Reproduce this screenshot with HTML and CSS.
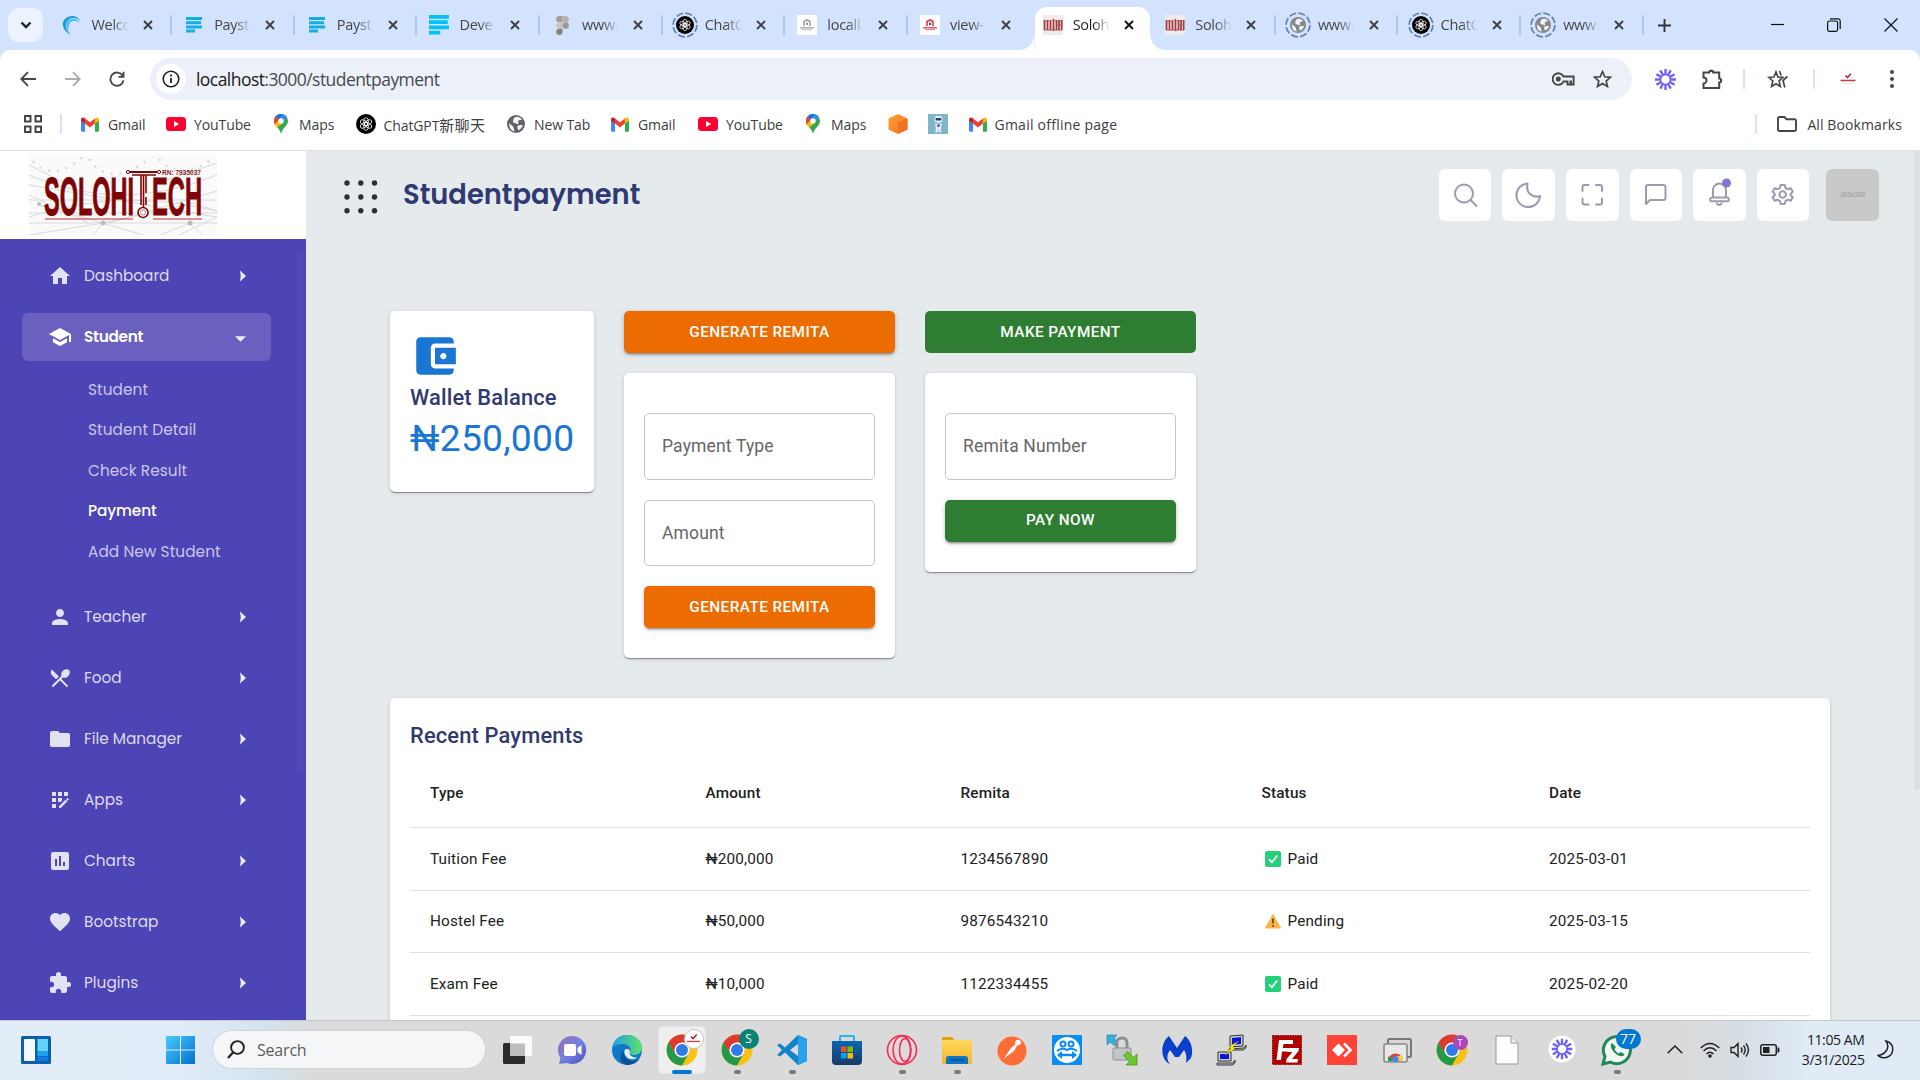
FILE: index.html
```html
<!DOCTYPE html>
<html lang="en">
<head>
<meta charset="utf-8">
<title>Studentpayment</title>
<link rel="stylesheet" href="styles.css">
</head>
<body>
<svg class="defs" width="0" height="0" aria-hidden="true">
  <defs>
    <linearGradient id="gBlue" x1="0" y1="0" x2="1" y2="1"><stop offset="0" stop-color="#4cc9fb"/><stop offset="1" stop-color="#0071cf"/></linearGradient>
    <linearGradient id="gEdge" x1="0" y1="0" x2="1" y2="0"><stop offset="0" stop-color="#1fa2e6"/><stop offset="1" stop-color="#5fe06a"/></linearGradient>
    <linearGradient id="gMeet" x1="0" y1="0" x2="1" y2="1"><stop offset="0" stop-color="#9a6fb8"/><stop offset=".5" stop-color="#7482dc"/><stop offset="1" stop-color="#4f4bc8"/></linearGradient>
    <linearGradient id="gStore" x1="0" y1="0" x2="0" y2="1"><stop offset="0" stop-color="#0a66b5"/><stop offset="1" stop-color="#173a66"/></linearGradient>
    <linearGradient id="gFolder" x1="0" y1="0" x2="0" y2="1"><stop offset="0" stop-color="#ffd75e"/><stop offset="1" stop-color="#f5b52a"/></linearGradient>
    <linearGradient id="gHex" x1="0" y1="0" x2="1" y2="1"><stop offset="0" stop-color="#ffa12e"/><stop offset="1" stop-color="#f4712a"/></linearGradient>
    <symbol id="x" viewBox="0 0 10 10"><path d="M1 1l8 8M9 1l-8 8" stroke="currentColor" stroke-width="1.9"/></symbol>
    <symbol id="stack" viewBox="0 0 16 16"><path d="M0 0h16v3H0zM0 4.2h15v3H0zM0 8.4h16v3H0zM0 12.6h9v3H0z" fill="currentColor"/></symbol>
    <symbol id="swoosh" viewBox="0 0 20 20"><path d="M9 20C-2 15-2 2 10 .5 15 0 18 3 19 6 15 1.500 8 1.500 5 7c-2 5 0 9 4 13z" fill="#1a9de0"/><path d="M7 17C2 10 6 3 12 3.500c4 0 5 3 6 5-3-4-8-4-10 0-1.500 3-1.500 6-1 8.500z" fill="#49c0f2"/></symbol>
    <symbol id="figma" viewBox="0 0 12 18"><path d="M3 0h3v6H3a3 3 0 010-6z" fill="#a49d98"/><path d="M6 0h3a3 3 0 010 6H6z" fill="#b7b0ac"/><path d="M3 6h3v6H3a3 3 0 010-6z" fill="#cbc6c2"/><circle cx="9" cy="9" r="3" fill="#999"/><path d="M3 12h3v3a3 3 0 11-3-3z" fill="#87827f"/></symbol>
    <symbol id="knot" viewBox="0 0 20 20"><circle cx="10" cy="10" r="10" fill="#000"/><g fill="none" stroke="#fff" stroke-width=".8"><ellipse cx="10" cy="7.600" rx="2.400" ry="4"/><ellipse cx="10" cy="7.600" rx="2.400" ry="4" transform="rotate(60 10 10)"/><ellipse cx="10" cy="7.600" rx="2.400" ry="4" transform="rotate(120 10 10)"/><ellipse cx="10" cy="7.600" rx="2.400" ry="4" transform="rotate(180 10 10)"/><ellipse cx="10" cy="7.600" rx="2.400" ry="4" transform="rotate(240 10 10)"/><ellipse cx="10" cy="7.600" rx="2.400" ry="4" transform="rotate(300 10 10)"/></g></symbol>
    <symbol id="globe" viewBox="0 0 20 20"><circle cx="10" cy="10" r="10" fill="currentColor"/><path d="M3 8c0 3 3 3 4 5s0 3 2 5C4 18 1.500 13 3 8zM8 3c3-2 7-.5 8.500 2-1 1-3 0-4 1.500s1 2 0 3.500c-1.500 1-2-1-4-1S6 6 8 3zM12 12c2-1.500 4-.5 5.500-1-.5 3-2.500 5-5 6-.5-2-2-3.500-.5-5z" fill="#f1f3f8"/></symbol>
    <symbol id="ring" viewBox="0 0 26 26"><circle cx="13" cy="13" r="11.900" fill="none" stroke="#5f7fb6" stroke-width="1.700" stroke-dasharray="7 2.350"/></symbol>
    <symbol id="school" viewBox="0 0 20 20"><path fill="#fff" d="M0 0h20v20H0z"/><path d="M7 11V6.500l3-1.700 3 1.700V11" fill="none" stroke="currentColor" stroke-width="1.500"/><path d="M9 7.500h2V10H9z" fill="currentColor"/><path d="M3 12.800h14" stroke="currentColor" stroke-width="1.200"/><path d="M5 14.700h10" stroke="currentColor" stroke-width=".7"/></symbol>
    <symbol id="solo" viewBox="0 0 20 20"><path fill="#f0eaea" d="M0 0h20v20H0z"/><path d="M1.500 5v10M4.500 5v10M7.500 5v10M10.500 4v12M13.500 5v10M16 5v10M18.700 5v10" stroke="#a0383b" stroke-width="1.700"/><path d="M1 15h18M1 6h5M12 6h7M13 10h6" stroke="#ac5658"/></symbol>
    <symbol id="gmail" viewBox="0 0 20 16"><path d="M0 2.500L4.500 6v10H1.400Q0 16 0 14.500z" fill="#4285f4"/><path d="M20 2.500L15.500 6v10h3.100Q20 16 20 14.500z" fill="#34a853"/><path d="M4.500 1.300L10 5.500l5.500-4.200V7L10 11.200 4.500 7z" fill="#ea4335"/><path d="M0 2.500C0 .2 2.500-.6 4.500 1.300V7L0 3.700z" fill="#c5221f"/><path d="M20 2.500c0-2.300-2.500-3.100-4.500-1.200V7L20 3.700z" fill="#fbbc04"/></symbol>
    <symbol id="yt" viewBox="0 0 20 14"><rect width="20" height="14" rx="3.500" fill="#f03"/><path d="M8 4v6l5.200-3z" fill="#fff"/></symbol>
    <symbol id="pin" viewBox="0 0 14 20"><path d="M7 20C6 14 0 12 0 7a7 7 0 0114 0c0 5-6 7-7 13z" fill="#34a853"/><path d="M.7 10.500A7 7 0 011.500 2.600L5 5.500z" fill="#ea4335"/><path d="M1.500 2.600A7 7 0 019 .3L5 5.500z" fill="#1a73e8"/><path d="M9 .3a7 7 0 014 3L8.500 8.500 5 5.500z" fill="#4285f4"/><path d="M.7 10.500L5.500 5l3 4L3.300 13.800z" fill="#fbbc04"/><circle cx="7" cy="7" r="2.700" fill="#fff"/></symbol>
    <symbol id="burst" viewBox="-12 -12 24 24"><g stroke="#6a63f6" stroke-width="2.700"><path d="M0-12V-5M0 5v7M-12 0h7M5 0h7M-6-10.400l3.500 6M2.500 4.300l3.500 6.100M6-10.400l-3.500 6M-2.500 4.300l-3.500 6.100M-10.400-6l6 3.500M4.300 2.500l6.100 3.500M-10.400 6l6-3.500M4.300-2.500l6.100-3.500"/></g><circle r="5.700" fill="none" stroke="#6a63f6" stroke-width="1.600"/></symbol>
    <symbol id="chrome" viewBox="-16 -16 32 32"><circle r="15.500" fill="#fbc116"/><path d="M-13.400-7.700A15.500 15.500 0 0113.400-7.700L0-7.500-6.500 3.700z" fill="#dd3b2f"/><path d="M-13.400-7.700A15.500 15.500 0 000 15.500L6.500 3.700-6.500 3.700z" fill="#239a4a"/><path d="M-13.400-7.700L-6.500 3.700 0-7.500z" fill="#dd3b2f"/><circle r="7.600" fill="#fff"/><circle r="6" fill="#2f7be8"/></symbol>
    <symbol id="right" viewBox="0 0 6 12"><path d="M0 .5L6 6 0 11.500q1.500-5.500 0-11z" fill="#edecf8"/></symbol>
  </defs>
</svg>

<div class="tabs">
  <div class="tab-search"><svg width="12" height="8" viewBox="0 0 12 8"><path d="M1.500 1.500L6 6l4.500-4.500" fill="none" stroke="#1f1f1f" stroke-width="2.300"/></svg></div>
  <div class="tab"><span class="fav"><svg width="19" height="20"><use href="#swoosh"/></svg></span><span class="tab-name">Welcc</span><svg class="close"><use href="#x"/></svg></div>
  <div class="tab"><span class="fav c-pay"><svg width="16" height="16"><use href="#stack"/></svg></span><span class="tab-name">Payst</span><svg class="close"><use href="#x"/></svg></div>
  <div class="tab"><span class="fav c-pay"><svg width="16" height="16"><use href="#stack"/></svg></span><span class="tab-name">Payst</span><svg class="close"><use href="#x"/></svg></div>
  <div class="tab"><span class="fav c-dev"><svg width="20" height="20"><use href="#stack"/></svg></span><span class="tab-name">Deve</span><svg class="close"><use href="#x"/></svg></div>
  <div class="tab"><span class="fav"><svg width="13" height="19"><use href="#figma"/></svg></span><span class="tab-name">www.</span><svg class="close"><use href="#x"/></svg></div>
  <div class="tab"><span class="fav"><svg width="18" height="18"><use href="#knot"/></svg><svg class="ring"><use href="#ring"/></svg></span><span class="tab-name">ChatG</span><svg class="close"><use href="#x"/></svg></div>
  <div class="tab"><span class="fav c-grey"><svg width="20" height="20"><use href="#school"/></svg></span><span class="tab-name">locall</span><svg class="close"><use href="#x"/></svg></div>
  <div class="tab before-active"><span class="fav c-red"><svg width="20" height="20"><use href="#school"/></svg></span><span class="tab-name">view-</span><svg class="close"><use href="#x"/></svg></div>
  <div class="tab active"><span class="fav"><svg width="20" height="20"><use href="#solo"/></svg></span><span class="tab-name">Soloh</span><svg class="close"><use href="#x"/></svg></div>
  <div class="tab"><span class="fav"><svg width="20" height="20"><use href="#solo"/></svg></span><span class="tab-name">Soloh</span><svg class="close"><use href="#x"/></svg></div>
  <div class="tab"><span class="fav c-globe"><svg width="16" height="16"><use href="#globe"/></svg><svg class="ring"><use href="#ring"/></svg></span><span class="tab-name">www.</span><svg class="close"><use href="#x"/></svg></div>
  <div class="tab"><span class="fav"><svg width="18" height="18"><use href="#knot"/></svg><svg class="ring"><use href="#ring"/></svg></span><span class="tab-name">ChatG</span><svg class="close"><use href="#x"/></svg></div>
  <div class="tab"><span class="fav c-globe"><svg width="16" height="16"><use href="#globe"/></svg><svg class="ring"><use href="#ring"/></svg></span><span class="tab-name">www.</span><svg class="close"><use href="#x"/></svg></div>
  <svg class="new-tab" width="13" height="13" viewBox="0 0 13 13"><path d="M6.500 0v13M0 6.500h13" stroke="#333" stroke-width="1.900"/></svg>
  <div class="window-controls">
    <svg width="13" height="14" viewBox="0 0 13 14"><path d="M0 6.500h13" stroke="#111" stroke-width="1.200"/></svg>
    <svg width="14" height="14" viewBox="0 0 14 14"><g fill="none" stroke="#111" stroke-width="1.200"><rect x=".6" y="3" width="10" height="10.400" rx="1.800"/><path d="M3 .8h8a2.200 2.200 0 012.200 2.200v8"/></g></svg>
    <svg width="14" height="14" viewBox="0 0 14 14"><path d="M.5.500l13 13M13.500.500l-13 13" stroke="#111" stroke-width="1.200"/></svg>
  </div>
</div>

<div class="toolbar-wrap">
<div class="toolbar">
  <div class="nav-icons">
    <svg width="16" height="16" viewBox="0 0 16 16"><path d="M16 8H1.500M8 1.200L1.300 8 8 14.800" fill="none" stroke="#454746" stroke-width="1.900"/></svg>
    <svg width="16" height="16" viewBox="0 0 16 16"><path d="M0 8h14.500M8 1.200L14.700 8 8 14.800" fill="none" stroke="#aaaeae" stroke-width="1.900"/></svg>
    <svg width="16" height="16" viewBox="0 0 17 17"><path d="M14.500 5A7 7 0 1015.400 10M15.400.8v5.400H10" fill="none" stroke="#454746" stroke-width="2"/></svg>
  </div>
  <div class="address">
    <span class="info"><svg width="18" height="18" viewBox="0 0 18 18"><circle cx="9" cy="9" r="7.800" fill="none" stroke="#1f1f1f" stroke-width="1.600"/><path d="M9 8v5M9 4.600v2" stroke="#1f1f1f" stroke-width="1.800"/></svg></span>
    <span class="url"><b>localhost</b>:3000/studentpayment</span>
    <svg class="key" width="23" height="14" viewBox="0 0 23 14"><path d="M11.500 4.500A5.600 5.600 0 101.200 9.500a5.600 5.600 0 0010.300 0h4v3h3v-3h.5v3h2.600v-8z" fill="none" stroke="#454746" stroke-width="1.900"/><circle cx="6.300" cy="7" r="2.500" fill="#454746"/></svg>
    <svg width="19" height="18" viewBox="0 0 19 18"><path d="M9.500 1.700l2.300 5.100 5.600.5-4.200 3.700 1.200 5.500-4.900-2.900-4.900 2.900L5.800 11 1.600 7.300l5.600-.5z" fill="none" stroke="#454746" stroke-width="1.700"/></svg>
  </div>
  <div class="tool-icons">
    <svg width="21" height="21"><use href="#burst"/></svg>
    <svg width="21" height="21" viewBox="0 0 21 21"><path d="M1.500 3.500h5.700a2 2 0 014 0h6v6a2 2 0 010 4V19H1.500v-4.500a2.800 2.800 0 000-6z" fill="none" stroke="#454746" stroke-width="2"/><path d="M7.500 3a1.700 1.700 0 013.400 0zM18 9.500a2 2 0 010 4z" fill="#454746"/></svg>
    <i class="sep"></i>
    <svg width="21" height="19" viewBox="0 0 21 19"><path d="M9 2l1.900 5 5 .4-3.800 3.500 1.200 5.500L9 13.700l-4.400 2.700L5.800 11 1.900 7.400l5-.4z" fill="none" stroke="#454746" stroke-width="1.700"/><path d="M12.500 1l1.700 4.500M20.500 6.500l-4.500 4 1.800 7" fill="none" stroke="#454746" stroke-width="1.700"/></svg>
    <i class="sep"></i>
    <svg width="16" height="12" viewBox="0 0 16 12"><path d="M5.500 2.500l2 2L11 .8" fill="none" stroke="#b71c2b" stroke-width="1.500"/><path d="M.5 7.500h15" stroke="#c2414d" stroke-width="1.600"/><path d="M3 10.500h10" stroke="#f6dede"/></svg>
    <svg width="4" height="18" viewBox="0 0 4 18"><g fill="#454746"><circle cx="2" cy="2" r="2"/><circle cx="2" cy="9" r="2"/><circle cx="2" cy="16" r="2"/></g></svg>
  </div>
</div>
</div>

<div class="bookmarks">
  <svg class="apps" width="18" height="18" viewBox="0 0 18 18"><path d="M1 1h5.500v5.500H1zM11.500 1H17v5.500h-5.500zM1 11.500h5.500V17H1zM11.500 11.500H17V17h-5.500z" fill="none" stroke="#454746" stroke-width="2"/></svg>
  <i class="sep"></i>
  <span class="bm bm-gmail"><svg width="18" height="15"><use href="#gmail"/></svg>Gmail</span>
  <span class="bm bm-yt"><svg width="20" height="14"><use href="#yt"/></svg>YouTube</span>
  <span class="bm bm-maps"><svg width="14" height="20"><use href="#pin"/></svg>Maps</span>
  <span class="bm bm-chat"><svg width="20" height="20"><use href="#knot"/></svg><span>ChatGPT<span class="cjk">新聊天</span></span></span>
  <span class="bm bm-new c-dark"><svg width="18" height="18"><use href="#globe"/></svg>New Tab</span>
  <span class="bm bm-gmail second"><svg width="18" height="15"><use href="#gmail"/></svg>Gmail</span>
  <span class="bm bm-yt"><svg width="20" height="14"><use href="#yt"/></svg>YouTube</span>
  <span class="bm bm-maps"><svg width="14" height="20"><use href="#pin"/></svg>Maps</span>
  <span class="bm bm-icon"><svg width="20" height="20" viewBox="0 0 20 20"><path d="M10 0l9.500 4.500v11L10 20 .5 15.500v-11z" fill="url(#gHex)"/><path d="M10 8.500l9.500-4v11L10 20z" fill="#ef6c20" opacity=".7"/></svg></span>
  <span class="bm bm-icon"><svg width="20" height="20" viewBox="0 0 20 20"><path fill="#7fb5c8" d="M0 0h20v20H0z"/><rect x="6.500" y="2" width="8" height="6.500" rx="3" fill="#eef3f8"/><rect x="7.500" y="4" width="6" height="2.500" rx="1" fill="#24406e"/><path d="M7 9.500h7l-1 5 .5 4h-2.300l-.7-3-.7 3H7.300l.5-4z" fill="#e4ebf5"/><circle cx="10.500" cy="11.500" r="1.500" fill="#3b6dc4"/></svg></span>
  <span class="bm bm-off"><svg width="18" height="15"><use href="#gmail"/></svg>Gmail offline page</span>
  <span class="all"><i class="sep"></i><svg width="20" height="16" viewBox="0 0 20 16"><path d="M1 2.500Q1 1 2.500 1h5l2 2.200h8Q19 3.200 19 4.700v8.800Q19 15 17.500 15h-15Q1 15 1 13.500z" fill="none" stroke="#454746" stroke-width="1.900"/></svg><span class="all-text">All Bookmarks</span></span>
</div>

<div class="page">
  <aside class="sidebar">
    <div class="logo">
      <svg width="188" height="80" viewBox="0 0 188 80">
        <path fill="#fafafa" d="M0 0h188v80H0z"/>
        <g stroke="#d9d9d9" fill="none"><path d="M0 30L188 62M0 58h188M0 68h188M10 50l64 18 90-20 24 8M74 68L0 80M74 68l-10 12M74 68l40 12M161 68l-30 12M161 68l12 12M188 62L150 80M0 40l60 28M188 36L80 68M0 10l40 20M188 8l-60 20"/><path d="M4 6q20 22 50-4M60 4q20 30 60 0M130 4q20 24 56-2" stroke-dasharray="2 7" stroke-width="2.500"/><path d="M0 20q90 40 188 0M0 45h188M0 62q90-30 188-6"/></g>
        <g fill="#bbb"><circle cx="74" cy="68" r="2.500"/><circle cx="161" cy="68" r="2.500"/><circle cx="10" cy="49" r="2"/></g>
        <g class="logo-text"><text x="15" y="60" textLength="90" lengthAdjust="spacingAndGlyphs">SOLOHI</text><text x="123" y="60" textLength="50" lengthAdjust="spacingAndGlyphs">ECH</text></g>
        <g stroke="#7d0505" fill="none"><path d="M101 17h27" stroke-width="2"/><path d="M103 20h24M112 20v30M114.500 20v32M117 20v18M117 42v8" stroke-width="1.600"/><circle cx="99" cy="17" r="1.600"/><circle cx="130" cy="17" r="1.600"/><circle cx="114" cy="57.500" r="5" stroke-width="1.600" fill="#fff"/><circle cx="114" cy="57.500" r="2.600" stroke="#c77"/><path d="M16 64h88M124 64h49" stroke="#c22b2b" stroke-width="1.200"/></g>
        <text class="logo-rn" x="133" y="19.500" textLength="39" lengthAdjust="spacingAndGlyphs">RN: 7935037</text>
      </svg>
    </div>
    <nav class="menu">
      <div class="item"><svg width="24" height="24" viewBox="0 0 24 24"><path d="M10 20v-6h4v6h5v-8h3L12 3 2 12h3v8z"/></svg><span>Dashboard</span><svg class="arr"><use href="#right"/></svg></div>
      <div class="item open"><svg width="24" height="24" viewBox="0 0 24 24"><path d="M5 13.200v4L12 21l7-3.800v-4L12 17zM12 3L1 9l11 6 9-4.900V17h2V9z"/></svg><span>Student</span><svg class="down" viewBox="0 0 12 6"><path d="M0 0h12L6 6z"/></svg></div>
      <div class="sub">
        <div>Student</div><div>Student Detail</div><div>Check Result</div><div class="current">Payment</div><div>Add New Student</div>
      </div>
      <div class="item"><svg width="24" height="24" viewBox="0 0 24 24"><path d="M12 12c2.200 0 4-1.800 4-4s-1.800-4-4-4-4 1.800-4 4 1.800 4 4 4zm0 2c-2.700 0-8 1.300-8 4v2h16v-2c0-2.700-5.300-4-8-4z"/></svg><span>Teacher</span><svg class="arr"><use href="#right"/></svg></div>
      <div class="item"><svg width="24" height="24" viewBox="0 0 24 24"><path d="M8.100 13.340l2.830-2.830L3.910 3.500c-1.560 1.560-1.560 4.090 0 5.660l4.190 4.180zm6.780-1.810c1.530.71 3.680.21 5.270-1.380 1.910-1.910 2.280-4.650.81-6.120-1.460-1.460-4.200-1.100-6.120.81-1.590 1.590-2.090 3.740-1.380 5.270L3.700 19.870l1.410 1.410L12 14.410l6.880 6.880 1.410-1.410L13.410 13l1.470-1.470z"/></svg><span>Food</span><svg class="arr"><use href="#right"/></svg></div>
      <div class="item"><svg width="24" height="24" viewBox="0 0 24 24"><path d="M10 4H4c-1.100 0-2 .9-2 2v12c0 1.100.9 2 2 2h16c1.100 0 2-.9 2-2V8c0-1.100-.9-2-2-2h-8z"/></svg><span>File Manager</span><svg class="arr"><use href="#right"/></svg></div>
      <div class="item"><svg width="24" height="24" viewBox="0 0 24 24"><path d="M10 4h4v4h-4zM4 16h4v4H4zM4 10h4v4H4zM4 4h4v4H4zM14 12.420V10h-4v4h2.420zM20.880 11.290l-1.170-1.170a.4.4 0 00-.58 0l-.88.88L20 12.750l.88-.88a.4.400 0 000-.58zM11 18.250V20h1.750l6.670-6.670-1.750-1.750zM16 4h4v4h-4z"/></svg><span>Apps</span><svg class="arr"><use href="#right"/></svg></div>
      <div class="item"><svg width="24" height="24" viewBox="0 0 24 24"><path fill-rule="evenodd" d="M19 3H5a2 2 0 00-2 2v14c0 1.100.9 2 2 2h14a2 2 0 002-2V5a2 2 0 00-2-2zM9 17H7v-7h2zm4 0h-2V7h2zm4 0h-2v-4h2z"/></svg><span>Charts</span><svg class="arr"><use href="#right"/></svg></div>
      <div class="item"><svg width="24" height="24" viewBox="0 0 24 24"><path d="M12 21.350l-1.450-1.320C5.400 15.360 2 12.280 2 8.500 2 5.420 4.420 3 7.500 3c1.740 0 3.410.81 4.500 2.090C13.090 3.810 14.760 3 16.500 3 19.580 3 22 5.420 22 8.500c0 3.780-3.400 6.860-8.550 11.540z"/></svg><span>Bootstrap</span><svg class="arr"><use href="#right"/></svg></div>
      <div class="item"><svg width="24" height="24" viewBox="0 0 24 24"><path d="M20.500 11H19V7c0-1.100-.9-2-2-2h-4V3.500a2.500 2.500 0 00-5 0V5H4c-1.100 0-1.990.9-1.990 2v3.800H3.500c1.490 0 2.700 1.210 2.700 2.700s-1.210 2.700-2.700 2.700H2V20c0 1.100.9 2 2 2h3.800v-1.500c0-1.490 1.210-2.700 2.700-2.700s2.700 1.210 2.700 2.700V22H17c1.100 0 2-.9 2-2v-4h1.500a2.500 2.500 0 000-5z"/></svg><span>Plugins</span><svg class="arr"><use href="#right"/></svg></div>
      <i class="thumb"></i>
    </nav>
  </aside>

  <main class="main">
    <header class="header">
      <svg class="dots" width="34" height="34" viewBox="0 0 34 34"><g fill="#2a3036"><circle cx="3" cy="3" r="2.700"/><circle cx="16.800" cy="3" r="2.700"/><circle cx="30.500" cy="3" r="2.700"/><circle cx="3" cy="17" r="2.700"/><circle cx="16.800" cy="17" r="2.700"/><circle cx="30.500" cy="17" r="2.700"/><circle cx="3" cy="30.700" r="2.700"/><circle cx="16.800" cy="30.700" r="2.700"/><circle cx="30.500" cy="30.700" r="2.700"/></g></svg>
      <h1>Studentpayment</h1>
      <div class="actions">
        <span class="act"><svg viewBox="0 0 52 52"><circle cx="25" cy="24.500" r="9"/><path d="M31.500 31l6 6"/></svg></span>
        <span class="act"><svg viewBox="0 0 52 52"><path d="M25.500 14.500A11.800 11.800 0 1038 27C30 29.500 23.500 23.500 25.500 14.500z"/></svg></span>
        <span class="act"><svg viewBox="0 0 52 52"><path d="M16.500 22v-4a2 2 0 012-2h4M30 16h4a2 2 0 012 2v4M36 29.500v4a2 2 0 01-2 2h-4M22.500 35.500h-4a2 2 0 01-2-2v-4"/></svg></span>
        <span class="act"><svg viewBox="0 0 52 52"><path d="M16 35V18a2 2 0 012-2h15.500a2 2 0 012 2v11a2 2 0 01-2 2H20z"/></svg></span>
        <span class="act"><svg viewBox="0 0 52 52"><path d="M20 28.500v-7.500a6.500 6.500 0 0113 0v7.500M19 28.500h15a1.500 1.500 0 010 3.800H19a1.500 1.500 0 010-3.800zM24 34.500a2.600 2.600 0 004.600 0"/><circle class="badge" cx="33.500" cy="14" r="4.500"/></svg></span>
        <span class="act"><svg viewBox="0 0 52 52"><circle cx="25.700" cy="25.500" r="3.300"/><path d="M23.700 16h4l.8 3 2.300 1.200 3-.9 2 3.400-2.200 2.200v1.200l2.200 2.200-2 3.400-3-.9-2.300 1.200-.8 3h-4l-.8-3-2.300-1.200-3 .9-2-3.400 2.200-2.200v-1.200l-2.200-2.200 2-3.400 3 .9 2.300-1.200z"/></svg></span>
        <span class="avatar">300x300</span>
      </div>
    </header>

    <div class="content">
      <div class="cards">
        <section class="card wallet">
          <svg width="50" height="50" viewBox="0 0 24 24"><path fill="#1976d2" d="M21 18v1c0 1.100-.9 2-2 2H5c-1.110 0-2-.9-2-2V5c0-1.100.89-2 2-2h14c1.100 0 2 .9 2 2v1h-9c-1.110 0-2 .9-2 2v8c0 1.100.89 2 2 2zm-9-2h10V8H12zm4-2.500c-.83 0-1.500-.67-1.500-1.500s.67-1.500 1.500-1.500 1.500.67 1.500 1.500-.67 1.500-1.500 1.500z"/></svg>
          <h2>Wallet Balance</h2>
          <div class="sum">₦250,000</div>
        </section>
        <div class="col">
          <div class="btn orange">GENERATE REMITA</div>
          <section class="card form">
            <div class="field">Payment Type</div>
            <div class="field">Amount</div>
            <div class="btn orange">GENERATE REMITA</div>
          </section>
        </div>
        <div class="col">
          <div class="btn green flat">MAKE PAYMENT</div>
          <section class="card form">
            <div class="field">Remita Number</div>
            <div class="btn green">PAY NOW</div>
          </section>
        </div>
      </div>
      <section class="card recent">
        <h2>Recent Payments</h2>
        <div class="row head"><span>Type</span><span>Amount</span><span>Remita</span><span>Status</span><span>Date</span></div>
        <div class="row"><span>Tuition Fee</span><span>₦200,000</span><span>1234567890</span><span class="st"><svg width="16" height="16" viewBox="0 0 16 16"><rect width="16" height="16" rx="2" fill="#25d07a"/><path d="M4 8.300L7 11.300 12.200 4.500" fill="none" stroke="#fff" stroke-width="1.700"/></svg>Paid</span><span>2025-03-01</span></div>
        <div class="row"><span>Hostel Fee</span><span>₦50,000</span><span>9876543210</span><span class="st"><svg width="16" height="16" viewBox="0 0 16 16"><path d="M8 1.500L15.500 15H.5z" fill="#fbb34c" stroke="#fbb34c" stroke-linejoin="round"/><path d="M8 5.500v5M8 12v1.800" stroke="#4a3a22" stroke-width="1.500"/></svg>Pending</span><span>2025-03-15</span></div>
        <div class="row"><span>Exam Fee</span><span>₦10,000</span><span>1122334455</span><span class="st"><svg width="16" height="16" viewBox="0 0 16 16"><rect width="16" height="16" rx="2" fill="#25d07a"/><path d="M4 8.300L7 11.300 12.200 4.500" fill="none" stroke="#fff" stroke-width="1.700"/></svg>Paid</span><span>2025-02-20</span></div>
      </section>
    </div>
  </main>
  <div class="scroll"></div>
</div>

<footer class="taskbar">
  <svg class="widgets" width="30" height="28" viewBox="0 0 30 28"><rect width="30" height="28" rx="1.500" fill="#0c5fa8"/><rect x="3" y="3" width="11" height="22" rx="1" fill="#f4f7fb"/><path d="M16.500 3H27v12H16.500z" fill="#62d3fb"/><path d="M16.500 15H27v5H16.500z" fill="#1ba0f2"/><path d="M16.500 20.500H27V25H16.500z" fill="#0a7de0"/></svg>
  <svg class="start" width="29" height="28" viewBox="0 0 29 28"><path d="M0 0h14v13.500H0zM15 0h14v13.500H15zM0 14.500h14V28H0zM15 14.500h14V28H15z" fill="url(#gBlue)"/></svg>
  <div class="search"><svg width="18" height="19" viewBox="0 0 18 19"><circle cx="10.500" cy="7.500" r="6.400" fill="none" stroke="#222" stroke-width="1.900"/><path d="M6 12.500l-5 5.500" stroke="#222" stroke-width="2.200"/></svg>Search</div>
  <div class="apps-row">
    <span class="app"><svg viewBox="0 0 32 32"><rect x="2" y="9" width="22" height="21" rx="1.500" fill="#2c2c2c"/><rect x="9" y="2" width="22" height="20" rx="1" fill="#fbfbfb"/><path d="M9 9.500h15V22H9z" fill="#bdbdbd"/></svg></span>
    <span class="app"><svg viewBox="0 0 32 32"><path d="M16 2a14 14 0 11-5 27l-8 1 1.500-6A14 14 0 0116 2z" fill="url(#gMeet)"/><rect x="8" y="10" width="12" height="12" rx="2" fill="#fff"/><path d="M21.500 14l4-3v10l-4-3z" fill="#fff"/></svg></span>
    <span class="app"><svg viewBox="0 0 32 32"><circle cx="16" cy="16" r="15" fill="#0f78c8"/><path d="M1.500 13C3 5 9 1 16 1c9 0 15 6 15 12.500 0 5-4 7.500-8 7.500-3 0-5-1-4-3 2-4-2-8-7-8-4 0-8 1-10.500 3z" fill="url(#gEdge)"/><path d="M13 17c-1 5 3 10 9 10 3 0 5-1 7-3-3 5-8 7-13 7-7-1-9-9-3-14z" fill="#0b5199"/><path d="M13.500 16.500c-1 5 4 10 10 8.500l3-1.500C22 24 17 21 19 18c0-3-4-4-5.500-1.500z" fill="#e8f2f5"/></svg></span>
    <span class="app current"><svg viewBox="0 0 32 32"><use href="#chrome"/></svg><b class="round white"><svg width="13" height="10" viewBox="0 0 16 12"><path d="M5 3l2.500 2.500L12 .5" fill="none" stroke="#b71c2b" stroke-width="2"/><path d="M0 9h16" stroke="#c2414d" stroke-width="1.600"/></svg></b><i class="pill"></i></span>
    <span class="app"><svg viewBox="0 0 32 32"><use href="#chrome"/></svg><b class="round teal">S</b><i class="dot"></i></span>
    <span class="app"><svg viewBox="0 0 32 32"><path d="M22 1l9 4v22l-9 4L9 18.500 4 22.500 1 21l5-5-5-5 3-1.500 5 4zM22.500 9.500L14 16l8.500 6.500z" fill="#1282cf" fill-rule="evenodd"/><path d="M22 1l9 4v22l-9 4z" fill="#2ba1ee"/></svg><i class="dot"></i></span>
    <span class="app"><svg viewBox="0 0 32 32"><path d="M9 7V3q0-1 1-1h12q1 0 1 1v4" fill="none" stroke="#27b3ee" stroke-width="2"/><path d="M1 7h30v20q0 4-4 4H5q-4 0-4-4z" fill="url(#gStore)"/><path d="M10 12.500h5.500V18H10z" fill="#f25022"/><path d="M16.500 12.500H22V18h-5.500z" fill="#7fba00"/><path d="M10 19h5.500v5.500H10z" fill="#00a4ef"/><path d="M16.500 19H22v5.500h-5.500z" fill="#ffb900"/></svg></span>
    <span class="app"><svg viewBox="0 0 32 32"><g fill="none" stroke="#fa2a55" stroke-width="1.600"><circle cx="16" cy="16" r="14.500"/><ellipse cx="16" cy="16" rx="9" ry="14"/><ellipse cx="19" cy="16" rx="5.500" ry="11.500"/></g></svg><i class="dot"></i></span>
    <span class="app"><svg viewBox="0 0 32 32"><path d="M1 4q0-1 1-1h9l3 4h-13z" fill="#e2a10e"/><rect x="1" y="6" width="30" height="24" rx="1" fill="url(#gFolder)"/><path d="M5 30v-5q0-3 3-3h16q3 0 3 3v5z" fill="#0f73c4"/><path d="M9 26h14" stroke="#0a4f90" stroke-width="1.500"/></svg><i class="dot"></i></span>
    <span class="app"><svg viewBox="0 0 32 32"><circle cx="16" cy="17" r="14.500" fill="#ff6c37"/><path d="M7 26l8-12 6-5 1 1-4 7-8 6z" fill="#fff"/><circle cx="22" cy="8.500" r="2.800" fill="#fff"/></svg></span>
    <span class="app"><svg viewBox="0 0 32 32"><rect x="1" y="1" width="30" height="30" rx="1" fill="#0a8cf5"/><circle cx="16" cy="16" r="13" fill="#fff"/><g fill="none" stroke="#0a8cf5" stroke-width="2"><circle cx="12" cy="10" r="2.500"/><circle cx="20" cy="10" r="2.500"/><path d="M6 17q5-4 10-1 5-3 10 1"/></g><path d="M6 21l5-4v2.700h10V17l5 4-5 4v-2.700H11V25z" fill="#0a8cf5"/></svg></span>
    <span class="app"><svg viewBox="0 0 32 32"><path d="M1 1h10L8 4l4 5-3 3-5-4-3 3z" fill="#35b0de" stroke="#24779c" stroke-width=".6"/><path d="M11 16V9q0-5 5-5t5 5v7" fill="none" stroke="#8b8f93" stroke-width="2.800"/><rect x="7" y="14" width="18" height="12" rx="1" fill="#c2c5c8" stroke="#8b8f93"/><path d="M31 31H20l3.500-3.500-6-6 4-4 6 6L31 20z" fill="#6cc92c" stroke="#3f8a16" stroke-width=".7"/></svg></span>
    <span class="app"><svg viewBox="0 0 32 32"><path d="M16 14l8-12c6 4 9 14 6 22l-5 5c1-7 0-10-2-13l-5 7h-4l-5-7c-3 4-4 9 0 14C0 27-2 10 8 2z" fill="#0b41c9"/></svg></span>
    <span class="app"><svg viewBox="0 0 32 32"><g stroke="#333" fill="#ccc"><path d="M14 2l13-1v11l-13 1zM13 15l15-1 2-3v3l-3 2H13z"/><path d="M2 18h13v9H2zM1 29h16l2-3v3l-3 2H1z"/></g><path d="M16 4l9-1v7l-9 1zM4 20h9v5H4z" fill="#0a14e0"/><path d="M23 7l-6 6 2 2-10 6 6-7-2-2z" fill="#f6ee1c" stroke="#7a7600" stroke-width=".6"/></svg></span>
    <span class="app"><svg viewBox="0 0 32 32"><rect x="1.500" y="1.500" width="29" height="29" fill="#b30000" stroke="#8a0000" stroke-dasharray="1.500 1"/><path d="M8 6h14v4H12.500l-.7 4H17v3.500h-6L10 26H5.500zM17 14h11l-.5 3-6.500 8h6l-.6 3.500H15l.5-3.500 6-7h-5z" fill="#fff"/></svg></span>
    <span class="app"><svg viewBox="0 0 32 32"><path d="M1 1h30v30H1z" fill="#ff4437"/><path d="M12.500 9.500L19 16l-6.500 6.500L6 16z" fill="#fff"/><path d="M18 9.500l6.500 6.500-6.500 6.500" fill="none" stroke="#fff" stroke-width="2.600"/></svg></span>
    <span class="app"><svg viewBox="0 0 32 32"><rect x="7" y="5" width="23" height="18" rx="1.500" fill="#d9d9d9" stroke="#777" stroke-width="2"/><rect x="3" y="10" width="23" height="18" rx="1.500" fill="#e8e8e8" stroke="#888" stroke-width="1.600"/><path d="M7 27a7.500 7.500 0 0115 0z" fill="#db4437"/><path d="M7 27q-1-3 1-5l4 5z" fill="#0f9d58"/><path d="M22 27q1-3-1-5h-6l3 5z" fill="#ffcd40"/><circle cx="14.500" cy="25" r="3" fill="#4285f4"/></svg></span>
    <span class="app"><svg viewBox="0 0 32 32"><use href="#chrome"/></svg><b class="round purple">T</b></span>
    <span class="app"><svg viewBox="0 0 32 32"><path d="M5 2h15l7 7v21H5z" fill="#fdfdfd" stroke="#999"/><path d="M20 2v7h7" fill="#eee" stroke="#999"/></svg></span>
    <span class="app"><svg viewBox="0 0 32 32"><circle cx="16" cy="15" r="13.500" fill="#fff"/><use href="#burst" x="5.500" y="4.500" width="21" height="21"/></svg></span>
    <span class="app"><svg viewBox="0 0 32 32"><path d="M2 30l2-7.500A13.500 13.500 0 119.500 28z" fill="#f2f7f4" stroke="#1f8a55" stroke-width="3"/><path d="M11 9c-3 2 0 8 4 11s8 3 8.500 0l-4-2-2 1.500c-2-1-3.500-3-4-4.500l1.500-2z" fill="#1f8a55"/></svg><b class="round count">77</b><i class="dot"></i></span>
  </div>
  <div class="tray">
    <svg width="16" height="9" viewBox="0 0 16 9"><path d="M.7 8.300L8 1l7.300 7.300" fill="none" stroke="#222" stroke-width="1.500"/></svg>
    <svg class="wifi" width="20" height="16" viewBox="0 0 20 16"><g fill="none" stroke="#222" stroke-width="1.500"><path d="M.7 6q9.300-9 18.600 0M3.500 9q6.500-6.500 13 0M6.500 12q3.500-3.500 7 0"/></g><circle cx="10" cy="14" r="1.800" fill="#222"/></svg>
    <svg class="sound" width="20" height="16" viewBox="0 0 20 16"><g fill="none" stroke="#222" stroke-width="1.400"><path d="M1 5.500h3L8 1.500v13l-4-4H1zM11 5.500q2 2.500 0 5M13.500 3.500q3.500 4.500 0 9M16 1.500q5 6.500 0 13"/></g></svg>
    <svg class="bat" width="20" height="12" viewBox="0 0 20 12"><rect x=".8" y=".8" width="15.500" height="10.400" rx="2" fill="none" stroke="#222" stroke-width="1.500"/><path d="M3 3h6.500v6H3zM17.500 3.500h1.500q1 2.500 0 5h-1.500z" fill="#222"/></svg>
    <div class="clock"><div>11:05 AM</div><div>3/31/2025</div></div>
    <svg class="moon" width="17" height="19" viewBox="0 0 17 19"><path d="M9 1C13 7 10 14 1 15.500 6 20 15 17.500 15.700 10 16 5 13 2 9 1z" fill="none" stroke="#222" stroke-width="1.500"/></svg>
  </div>
</footer>
</body>
</html>
```
FILE: styles.css
```css
* { box-sizing: border-box; }
body {
  margin: 0;
  width: 1920px;
  height: 1080px;
  overflow: hidden;
  display: flex;
  flex-direction: column;
  font-family: Roboto, "Liberation Sans", sans-serif;
  background: #fff;
}
svg { display: block; flex: none; }
.defs { position: absolute; }

/* Browser tabs */
.tabs {
  height: 50px;
  flex: none;
  display: flex;
  align-items: center;
  background: #d3e3fd;
  font: 14.5px "Open Sans", "Noto Sans", sans-serif;
  letter-spacing: -0.3px;
  color: #454746;
}
.tab-search {
  width: 35px;
  height: 34px;
  margin: 0 6.500px 0 8px;
  flex: none;
  display: grid;
  place-items: center;
  border-radius: 11px;
  background: #ecf3fe;
}
.tab {
  width: 122.65px;
  height: 50px;
  flex: none;
  display: flex;
  align-items: center;
  padding-left: 9px;
  position: relative;
}
.tab::after {
  content: "";
  width: 2px;
  height: 20px;
  border-radius: 1px;
  background: #a8c7fa;
  margin-left: 17.500px;
}
.before-active::after { visibility: hidden; }
.fav { width: 26px; height: 26px; display: grid; place-items: center; position: relative; }
.fav .ring { position: absolute; inset: 0; width: 26px; height: 26px; }
.c-pay { color: #14aee5; }
.c-dev { color: #00c3f7; }
.c-grey { color: #999; }
.c-red { color: #d32f3a; }
.c-globe { color: #85898c; }
.tab-name {
  width: 43px;
  margin-left: 7px;
  white-space: nowrap;
  line-height: 24px;
  -webkit-mask-image: linear-gradient(90deg, #000 48%, transparent 86%);
  mask-image: linear-gradient(90deg, #000 48%, transparent 86%);
}
.close { width: 10px; height: 10px; margin-left: 8px; color: #3c3e40; }
.tab.active { color: #1f1f1f; z-index: 1; }
.tab.active > * { position: relative; z-index: 1; }
.tab.active .close { color: #111; }
.tab.active::before {
  content: "";
  position: absolute;
  left: 4px;
  right: 3.500px;
  top: 7px;
  bottom: 0;
  border-radius: 12px 12px 0 0;
  background: #fff;
}
.tab.active::after {
  position: absolute;
  margin: 0;
  left: -10.500px;
  bottom: 0;
  width: 144px;
  height: 14px;
  border-radius: 0;
  z-index: 0;
  background:
    radial-gradient(circle at 0 0, transparent 13.500px, #fff 14px) left / 14.500px 14px no-repeat,
    radial-gradient(circle at 100% 0, transparent 13.500px, #fff 14px) right / 14.500px 14px no-repeat;
}
.new-tab { margin-left: 14px; }
.window-controls { display: flex; gap: 43px; margin: 0 22px 0 auto; }

/* Toolbar */
.toolbar-wrap { height: 58px; flex: none; background: #d3e3fd; }
.toolbar {
  height: 58px;
  display: flex;
  align-items: center;
  background: #fff;
  border-radius: 10px 10px 0 0;
}
.nav-icons { width: 150px; display: flex; gap: 28.500px; padding-left: 20px; }
.address {
  width: 1482px;
  height: 42px;
  display: flex;
  align-items: center;
  border-radius: 21px;
  background: #ecf0f9;
  padding: 0 20px 0 6px;
}
.info { width: 30px; height: 30px; border-radius: 50%; background: #fff; display: grid; place-items: center; }
.url { margin-left: 10px; font: 17.500px "Open Sans", "Noto Sans", sans-serif; letter-spacing: -0.55px; color: #474a4d; }
.url b { font-weight: 400; color: #1a1a1a; }
.key { margin: 0 18px 0 auto; }
.tool-icons { display: flex; align-items: center; padding-left: 23px; }
.tool-icons > :nth-child(2) { margin-left: 25.500px; }
.tool-icons > :nth-child(3) { margin-left: 20.500px; }
.tool-icons > :nth-child(4) { margin-left: 21.500px; }
.tool-icons > :nth-child(5) { margin-left: 25px; }
.tool-icons > :nth-child(6) { margin-left: 25px; }
.tool-icons > :nth-child(7) { margin-left: 34.500px; }
.sep { display: block; width: 2px; height: 20px; border-radius: 1px; background: #d3e3fd; flex: none; }

/* Bookmarks */
.bookmarks {
  height: 43px;
  flex: none;
  display: flex;
  align-items: center;
  padding: 0 18px 10px 24px;
  border-bottom: 1px solid #dfdfdf;
  font: 14px "Open Sans", "Noto Sans", "Noto Sans CJK SC", sans-serif;
  letter-spacing: -0.1px;
  color: #3c3e40;
  white-space: nowrap;
}
.bookmarks > .sep { margin-left: 18px; margin-right: 19px; }
.bm { display: flex; align-items: center; gap: 8px; flex: none; }
.bm-gmail { width: 85px; gap: 9px; }
.bm-gmail.second { width: 87px; }
.bm-yt { width: 108px; }
.bm-maps { width: 81.500px; gap: 11px; }
.bm-chat { width: 151.500px; }
.cjk { font-size: 15px; letter-spacing: .3px; }
.bm-new { width: 104px; gap: 9px; }
.bm-icon { width: 40.500px; }
.bm-off { letter-spacing: .24px; }
.c-dark svg { color: #5f6368; }
.all { display: flex; align-items: center; margin-left: auto; letter-spacing: .1px; }
.all svg { margin: 0 10px 0 20px; }

/* Page */
.page { height: 869px; flex: none; display: flex; background: #e5eaed; overflow: hidden; }
.sidebar { width: 306px; flex: none; display: flex; flex-direction: column; background: #4d44b5; font-family: Poppins, Inter, sans-serif; }
.logo { height: 88px; flex: none; background: #fff; padding: 4px 0 0 29px; }
.logo-text { font: 700 53px "Liberation Sans", sans-serif; fill: #7d0505; stroke: #7d0505; stroke-width: 1px; }
.logo-rn { font: 700 6.500px "Liberation Sans", sans-serif; fill: #8d1a1a; }
.menu { position: relative; flex: 1; padding: 13px 35px 0 22px; font-size: 15.300px; color: #dedbf1; }
.thumb { position: absolute; left: 296px; top: 12px; width: 7px; height: 521px; border-radius: 4px; background: #524ab2; }
.item { height: 48px; margin-bottom: 13px; padding: 0 25px 0 26px; display: flex; align-items: center; border-radius: 6px; fill: #e3e1f4; }
.item span { margin: -2px 0 0 12px; flex: 1; }
.arr { width: 6px; height: 12px; margin-top: -1px; }
.down { width: 11px; height: 6px; margin-top: 4px; fill: #edecf8; }
.open { background: #6960c0; color: #fff; fill: #fff; font-weight: 600; margin-bottom: 0; letter-spacing: -0.3px; }
.sub { height: 232px; padding: 9px 0 0 66px; letter-spacing: .08px; }
.sub div { height: 40.400px; line-height: 40.400px; color: #cbc7ea; }
.sub .current { color: #fff; font-weight: 500; letter-spacing: -.1px; }

.main { width: 1608px; display: flex; flex-direction: column; }
.scroll { width: 6px; height: 639px; background: #d9e0e6; }
.header { height: 88px; flex: none; display: flex; align-items: center; padding: 0 35px 0 37.500px; }
.dots { margin-top: 3px; }
.header h1 { margin: 0 0 0 25.500px; font: 600 27.350px Poppins, Inter, sans-serif; color: #303972; }
.actions { display: flex; gap: 11px; margin-left: auto; }
.act, .avatar { width: 52.600px; height: 52px; border-radius: 6px; background: #fff; }
.act svg { width: 52px; height: 52px; fill: none; stroke: #a098ae; stroke-width: 2; stroke-linecap: round; stroke-linejoin: round; }
.act .badge { fill: #8379d4; stroke: none; }
.avatar { margin-left: 6px; display: grid; place-items: center; background: #c9c9c9; color: #999; font-size: 6.500px; }

.content { flex: none; padding: 72px 84px 0 84px; }
.cards { display: flex; gap: 30px; align-items: flex-start; }
.card { background: #fff; border-radius: 5px; box-shadow: 0 2px 1px -1px rgba(0,0,0,.25), 0 1px 1px rgba(0,0,0,.16), 0 1px 4px rgba(0,0,0,.13); }
.card h2 { margin: 0; font-size: 21.875px; font-weight: 500; line-height: 35px; letter-spacing: .16px; color: #303972; }
.wallet { width: 204px; height: 181px; padding: 20px; }
.wallet h2 { margin-top: -1px; white-space: nowrap; }
.sum { font-size: 37.200px; line-height: 46px; letter-spacing: .27px; color: #1976d2; white-space: nowrap; }
.col { width: 271px; display: flex; flex-direction: column; gap: 20px; }
.btn { height: 42px; display: grid; place-items: center; padding-bottom: 1px; border-radius: 5px; color: #fff; font-size: 15.300px; font-weight: 500; letter-spacing: .44px; box-shadow: 0 3px 2px -2px rgba(0,0,0,.25), 0 2px 3px rgba(0,0,0,.16), 0 1px 6px rgba(0,0,0,.13); }
.flat { box-shadow: none; }
.orange { background: #ed6c02; }
.green { background: #2e7d32; }
.form { padding: 40px 20px 30px; display: flex; flex-direction: column; gap: 20px; }
.field { height: 66.500px; display: flex; align-items: center; padding-left: 17px; border: 1px solid #c4c4c4; border-radius: 5px; color: #666; font-size: 17.500px; letter-spacing: .16px; }
.recent { margin-top: 40px; height: 420px; padding: 20px 20px 0 20px; }
.row { height: 62.600px; display: grid; grid-template-columns: 275.500px 255px 301px 287.500px 1fr; align-items: center; padding-left: 20px; border-bottom: 1px solid #e0e0e0; font-size: 15.300px; letter-spacing: .17px; color: #212121; }
.row.head { height: 75px; padding-top: 6px; font-weight: 500; }
.st { display: flex; align-items: center; gap: 7px; padding-left: 3px; }

/* Taskbar */
.taskbar {
  height: 60px;
  flex: none;
  display: flex;
  align-items: center;
  padding-bottom: 1.500px;
  border-top: 1px solid #c6c8ca;
  background: linear-gradient(90deg, #e3edf8 0, #e0ecf7 180px, #d3e3ee 270px, #dadada 315px, #dadada 1680px, #d6dee5 1740px, #e0ebf6 1810px, #e0ebf6);
  font-family: "Open Sans", "Noto Sans", sans-serif;
}
.widgets { margin-left: 21px; }
.start { margin-left: 115px; }
.search { width: 274px; height: 39px; margin-left: 17px; display: flex; align-items: center; gap: 12px; padding-left: 14px; border-radius: 20px; border: 1px solid #d0d3d6; background: #f4f6f8; font-size: 16px; letter-spacing: -.2px; color: #5c5c5c; }
.apps-row { display: flex; margin-left: 3.500px; }
.app { width: 55px; height: 48px; display: grid; place-items: center; position: relative; flex: none; }
.app > svg { width: 32px; height: 32px; position: relative; }
.current.app::before { content: ""; position: absolute; inset: 0 3.500px; border-radius: 5px; background: #efefef; border: 1px solid #e4e4e4; }
.round { position: absolute; left: 29px; top: 3px; width: 20px; height: 20px; border-radius: 50%; display: grid; place-items: center; color: #fff; font-weight: 400; font-size: 12px; }
.white { background: #fff; border: 1px solid #c4c4c4; }
.teal { background: #0b8276; }
.purple { background: #ab47bc; width: 15px; height: 15px; top: 9px; left: 28px; font-size: 9px; }
.count { background: #0078d4; left: 26px; width: 25px; border-radius: 10px; font-size: 14px; }
.dot, .pill { position: absolute; bottom: 0; left: 24px; width: 7px; height: 4px; border-radius: 2px; background: #7a7a7a; }
.pill { left: 17.500px; width: 20px; background: #0078d4; }
.tray { display: flex; align-items: center; margin-left: 22px; flex: 1; }
.wifi { margin-left: 17px; }
.sound { margin-left: 10px; }
.bat { margin-left: 10px; }
.clock { width: 85px; text-align: right; font-size: 14px; line-height: 20px; letter-spacing: -.4px; color: #1b1b1b; white-space: nowrap; }
.moon { margin-left: 12px; }
```
